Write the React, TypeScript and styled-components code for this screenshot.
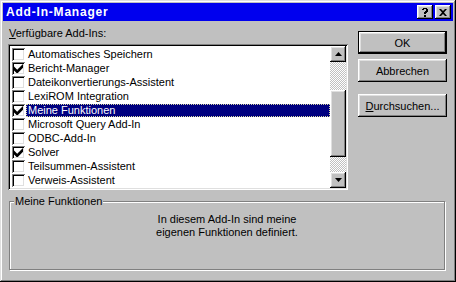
import React from 'react';
import styled, { createGlobalStyle, css } from 'styled-components';

const GlobalStyle = createGlobalStyle`
  html, body {
    margin: 0;
    padding: 0;
    background: #c0c0c0;
  }
  body {
    font-family: "Liberation Sans", Arial, sans-serif;
    font-size: 11px;
    color: #000;
  }
`;

const raised = css`
  box-shadow: inset -1px -1px #000, inset 1px 1px #fff, inset -2px -2px #808080, inset 2px 2px #dfdfdf;
`;

const Window = styled.div`
  width: 456px;
  height: 282px;
  box-sizing: border-box;
  padding: 3px;
  background: #c0c0c0;
  display: flex;
  flex-direction: column;
  box-shadow: inset -1px -1px #000, inset 1px 1px #dfdfdf, inset -2px -2px #808080, inset 2px 2px #fff;
`;

const TitleBar = styled.div`
  height: 18px;
  background: #0000ee;
  display: flex;
  align-items: center;
  padding: 0 2px 0 3px;
  gap: 2px;
`;

const Title = styled.span`
  flex: 1;
  color: #fff;
  font-weight: bold;
  font-size: 12px;
  letter-spacing: 0.8px;
`;

const TitleButton = styled.div`
  width: 16px;
  height: 14px;
  box-sizing: border-box;
  background: #c0c0c0;
  ${raised};
  display: flex;
  align-items: center;
  justify-content: center;
`;

const Body = styled.div`
  display: grid;
  grid-template-columns: 340px 89px;
  column-gap: 10px;
  padding: 6px 0 0 5px;
`;

const LeftCol = styled.div`
  display: flex;
  flex-direction: column;
`;

const Label = styled.div`
  line-height: 13px;
  height: 13px;
  margin: 0 0 4px 1px;
`;

const Key = styled.span`
  text-decoration: underline;
`;

const ListBox = styled.div`
  height: 146px;
  box-sizing: border-box;
  padding: 2px;
  background: #fff;
  box-shadow: inset 1px 1px #808080, inset -1px -1px #fff, inset 2px 2px #000, inset -2px -2px #dfdfdf;
  display: flex;
`;

const Items = styled.div`
  flex: 1;
  padding-top: 1px;
`;

const Row = styled.div`
  height: 14px;
  display: flex;
  align-items: center;
  padding-left: 2px;
`;

const Check = styled.div`
  width: 13px;
  height: 13px;
  box-sizing: border-box;
  background: #fff;
  box-shadow: inset 1px 1px #808080, inset -1px -1px #fff, inset 2px 2px #000, inset -2px -2px #dfdfdf;
  display: flex;
  align-items: center;
  justify-content: center;
  flex-shrink: 0;
`;

const ItemText = styled.div<{ $selected?: boolean }>`
  flex: 1;
  height: 13px;
  line-height: 13px;
  margin-left: 1px;
  padding-left: 2px;
  white-space: nowrap;
  ${(p) =>
    p.$selected &&
    css`
      background: #000080;
      color: #fff;
      outline: 1px dotted #d8d8a0;
      outline-offset: -1px;
    `}
`;

const ScrollBar = styled.div`
  width: 16px;
  display: flex;
  flex-direction: column;
`;

const ScrollButton = styled.div`
  width: 16px;
  height: 16px;
  box-sizing: border-box;
  background: #c0c0c0;
  ${raised};
  display: flex;
  align-items: center;
  justify-content: center;
`;

const Track = styled.div`
  flex: 1;
  display: flex;
  flex-direction: column;
  background: repeating-conic-gradient(#c0c0c0 0 25%, #fff 0 50%) 0 0 / 2px 2px;
`;

const Thumb = styled.div`
  margin-top: 28px;
  height: 67px;
  background: #c0c0c0;
  ${raised};
`;

const RightCol = styled.div`
  display: flex;
  flex-direction: column;
  padding-top: 4px;
`;

const Button = styled.div<{ $default?: boolean; $gap?: number }>`
  width: 89px;
  height: 23px;
  box-sizing: border-box;
  margin-top: ${(p) => p.$gap ?? 0}px;
  display: flex;
  align-items: center;
  justify-content: center;
  background: #c0c0c0;
  ${(p) =>
    p.$default
      ? css`
          box-shadow: inset -1px -1px #000, inset 1px 1px #000, inset -2px -2px #000, inset 2px 2px #fff,
            inset -3px -3px #808080, inset 3px 3px #dfdfdf;
        `
      : raised};
`;

const GroupBox = styled.div`
  position: relative;
  width: 436px;
  height: 69px;
  box-sizing: border-box;
  margin: 11px 0 0 6px;
  border: 1px solid #808080;
  box-shadow: inset 1px 1px #fff, 1px 1px #fff;
  display: flex;
  flex-direction: column;
  align-items: center;
  padding-top: 11px;
`;

const Legend = styled.span`
  position: absolute;
  top: -7px;
  left: 4px;
  padding: 0 1px;
  background: #c0c0c0;
  line-height: 13px;
`;

const Description = styled.div`
  text-align: center;
  line-height: 13px;
`;

const CheckMark = () => (
  <svg width="9" height="9" viewBox="0 0 7 7">
    <path d="M0 2v3l2 2h1l4-4V0L2.5 4.5z" fill="#000" />
  </svg>
);

const items = [
  { name: 'Automatisches Speichern', checked: false },
  { name: 'Bericht-Manager', checked: true },
  { name: 'Dateikonvertierungs-Assistent', checked: false },
  { name: 'LexiROM Integration', checked: false },
  { name: 'Meine Funktionen', checked: true, selected: true },
  { name: 'Microsoft Query Add-In', checked: false },
  { name: 'ODBC-Add-In', checked: false },
  { name: 'Solver', checked: true },
  { name: 'Teilsummen-Assistent', checked: false },
  { name: 'Verweis-Assistent', checked: false },
];

export default function App() {
  return (
    <>
      <GlobalStyle />
      <Window>
        <TitleBar>
          <Title>Add-In-Manager</Title>
          <TitleButton>
            <svg width="8" height="9" viewBox="0 0 8 9">
              <path d="M1 1h1V0h4v1h1v3H6v1H5v1H3V4h1V3h1V1H3v1H1z M3 7h2v2H3z" fill="#000" />
            </svg>
          </TitleButton>
          <TitleButton>
            <svg width="8" height="7" viewBox="0 0 8 7">
              <path d="M0 0h2l2 2 2-2h2L5 3.5 8 7H6L4 5 2 7H0l3-3.5z" fill="#000" />
            </svg>
          </TitleButton>
        </TitleBar>
        <Body>
          <LeftCol>
            <Label>
              <Key>V</Key>erfügbare Add-Ins:
            </Label>
            <ListBox>
              <Items>
                {items.map((it) => (
                  <Row key={it.name}>
                    <Check>{it.checked && <CheckMark />}</Check>
                    <ItemText $selected={it.selected}>{it.name}</ItemText>
                  </Row>
                ))}
              </Items>
              <ScrollBar>
                <ScrollButton>
                  <svg width="7" height="4" viewBox="0 0 7 4">
                    <path d="M3.5 0L7 4H0z" fill="#000" />
                  </svg>
                </ScrollButton>
                <Track>
                  <Thumb />
                </Track>
                <ScrollButton>
                  <svg width="7" height="4" viewBox="0 0 7 4">
                    <path d="M0 0h7L3.5 4z" fill="#000" />
                  </svg>
                </ScrollButton>
              </ScrollBar>
            </ListBox>
          </LeftCol>
          <RightCol>
            <Button $default>OK</Button>
            <Button $gap={5}>Abbrechen</Button>
            <Button $gap={12}>
              <span>
                <Key>D</Key>urchsuchen...
              </span>
            </Button>
          </RightCol>
        </Body>
        <GroupBox>
          <Legend>Meine Funktionen</Legend>
          <Description>
            In diesem Add-In sind meine
            <br />
            eigenen Funktionen definiert.
          </Description>
        </GroupBox>
      </Window>
    </>
  );
}
